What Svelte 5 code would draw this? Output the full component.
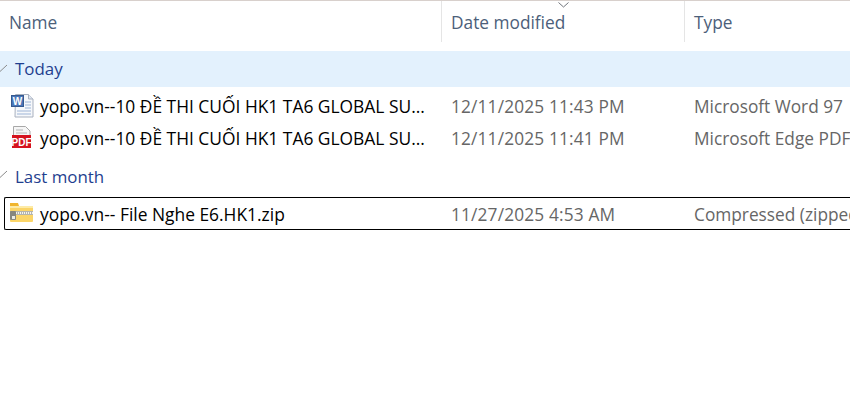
<script>
  let groups = [
    {
      name: "Today",
      tinted: true,
      files: [
        { icon: "word", name: "yopo.vn--10 ĐỀ THI CUỐI HK1 TA6 GLOBAL SU...", date: "12/11/2025 11:43 PM", type: "Microsoft Word 97" },
        { icon: "pdf", name: "yopo.vn--10 ĐỀ THI CUỐI HK1 TA6 GLOBAL SU...", date: "12/11/2025 11:41 PM", type: "Microsoft Edge PDF" }
      ]
    },
    {
      name: "Last month",
      tinted: false,
      files: [
        { icon: "zip", name: "yopo.vn-- File Nghe E6.HK1.zip", date: "11/27/2025 4:53 AM", type: "Compressed (zipped)", focused: true }
      ]
    }
  ];
</script>

<div class="explorer">
  <div class="header">
    <div class="col col-name">Name</div>
    <div class="col col-date">
      <svg class="sort" width="12" height="6" viewBox="0 0 12 6"><path d="M.5.5l5 4.5 5-4.5" fill="none" stroke="#70757c" /></svg>
      Date modified
    </div>
    <div class="col col-type">Type</div>
  </div>

  {#each groups as group}
    <div class="group" class:tinted={group.tinted}>
      <svg class="chev" width="8" height="8" viewBox="0 0 8 8"><path d="M0 7.5L7 1" fill="none" stroke="#8a8a8a" /></svg>
      <span>{group.name}</span>
    </div>
    <div class="rows">
      {#each group.files as file}
        <div class="row" class:focused={file.focused}>
          <div class="cell-name">
            <svg class="icon" width="24" height="24" viewBox="0 0 24 24">
              {#if file.icon === "word"}
                <path d="M5.5.5h13l4.500 4.500v18h-18z" fill="#f6f8fb" stroke="#a9b1bf" />
                <path d="M18.500.5v4.500h4.500" fill="#dfe5f0" stroke="#a9b1bf" />
                <path d="M15 8h6M15 11h6M15 14h6M7 17h14M7 20h14" stroke="#9db4d6" />
                <rect x="1.500" y="1.500" width="12" height="11" fill="#4a76b8" stroke="#35598f" />
                <text x="7.500" y="11" class="w">W</text>
              {:else if file.icon === "pdf"}
                <path d="M3.500.5h12l4.500 4.500v5h-16.500z" fill="#f6f6f6" stroke="#a8a8a8" />
                <path d="M6 4h7M6 7h11" stroke="#b5b5b5" />
                <rect x="2" y="9" width="19" height="13" fill="#d5121e" />
                <text x="11.500" y="19.500" class="p">PDF</text>
              {:else}
                <path d="M0 5V2h8l1 3z" fill="#f0b52e" />
                <rect x="0" y="5" width="23" height="16" rx="1" fill="#fbd568" />
                <rect x="0" y="5" width="23" height="2" fill="#fdeba8" />
                <rect x="0" y="10" width="23" height="4" fill="#b4b4ae" />
                <path d="M6 12h17" stroke="#f4f4ee" stroke-dasharray="1 1" stroke-width="2" />
                <rect x="0" y="10" width="6" height="9" rx="1" fill="#87877f" />
                <rect x="2" y="15" width="3" height="3" fill="#ecece4" />
              {/if}
            </svg>
            <span>{file.name}</span>
          </div>
          <div class="cell-date">{file.date}</div>
          <div class="cell-type">{file.type}</div>
        </div>
      {/each}
    </div>
  {/each}
</div>

<style>
  :global(body) {
    background: #fff;
    overflow: hidden;
  }

  .explorer {
    width: 850px;
    height: 406px;
    overflow: hidden;
    font-family: "Open Sans", "Noto Sans", sans-serif;
    font-size: 17.3px;
    border-top: 1px solid #d8d0cc;
    box-sizing: border-box;
    white-space: nowrap;
  }

  .header {
    display: flex;
    height: 41px;
    color: #4c607a;
    margin-bottom: 9px;
  }

  .col {
    position: relative;
    box-sizing: border-box;
    line-height: 43px;
  }

  .col-name {
    width: 441px;
    padding-left: 9px;
  }

  .col-date {
    width: 243px;
    padding-left: 9px;
    border-left: 1px solid #e5e5e5;
  }

  .col-type {
    flex: 1;
    padding-left: 9px;
    border-left: 1px solid #e5e5e5;
  }

  .sort {
    position: absolute;
    left: 116px;
    top: 1px;
  }

  .group {
    display: flex;
    align-items: center;
    height: 36px;
    box-sizing: border-box;
    padding: 2px 0 0 15px;
    font-size: 16.9px;
    color: #1f3f8f;
    position: relative;
  }

  .group.tinted {
    padding: 0 0 2px 15px;
    background: #e3f1fd;
  }

  .chev {
    position: absolute;
    left: 0;
    top: 13px;
  }

  .rows {
    padding: 3px 0;
  }

  .row {
    display: flex;
    align-items: center;
    height: 32px;
    box-sizing: border-box;
  }

  .row.focused {
    height: 33px;
    margin-left: 4px;
    margin-top: 1px;
    padding-top: 1px;
    border: 1px solid #000;
    border-right: none;
    border-radius: 2px 0 0 2px;
  }

  .cell-name {
    display: flex;
    align-items: center;
    flex: none;
    width: 451px;
    font-size: 17.4px;
    color: #000;
  }

  .focused .cell-name {
    width: 446px;
  }

  .icon {
    margin-left: 10px;
    margin-right: 6px;
    flex: none;
  }

  .focused .icon {
    margin-left: 5px;
    margin-top: -2px;
  }

  .cell-date {
    flex: none;
    width: 243px;
    color: #666;
    letter-spacing: 0.16px;
  }

  .cell-type {
    flex: none;
    color: #666;
  }

  .w {
    font: bold 10px "Liberation Sans", sans-serif;
    fill: #fff;
    text-anchor: middle;
  }

  .p {
    font: bold 10px "Liberation Sans", sans-serif;
    fill: #fff;
    text-anchor: middle;
  }
</style>
